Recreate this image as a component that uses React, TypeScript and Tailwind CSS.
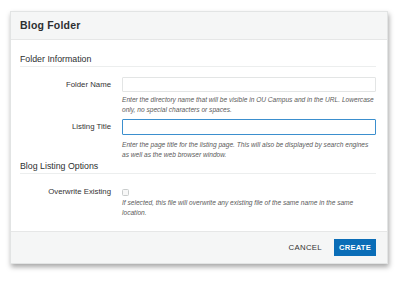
import React from 'react';

const font = { fontFamily: '"Liberation Sans", Arial, sans-serif' };

const Help: React.FC<{ children: React.ReactNode; className?: string }> = ({ children, className }) => (
  <p className={`ml-[102px] text-[6.6px] leading-[9.5px] italic text-[#5a5a5a] ${className ?? ''}`}>{children}</p>
);

export default function App() {
  return (
    <div className="w-[400px] h-[281px] bg-white pt-[11px] pl-[10px]" style={font}>
      <div className="w-[378px] bg-white border border-[#e2e4e4] shadow-[1px_3px_5px_rgba(0,0,0,0.35)] flex flex-col">
        <div className="h-[28px] bg-[#f5f6f6] border-b border-[#e6e7e7] px-[9px] flex items-center">
          <h1 className="text-[10.5px] font-bold text-[#2d2f31] tracking-[0.2px]">Blog Folder</h1>
        </div>

        <div className="pl-[9px] pr-[11px] pt-[14px] pb-[14px]">
          <h2 className="text-[8.8px] leading-[11px] text-[#2d2f31] border-b border-[#eceeee] pb-[1px]">Folder Information</h2>

          <div className="flex items-center mt-[10px]">
            <label className="w-[91px] text-right text-[7.8px] text-[#333]">Folder Name</label>
            <input className="ml-[11px] flex-1 h-[15px] border border-[#e3e5e5] rounded-[1px] bg-white outline-none" />
          </div>
          <Help className="mt-[3px]">
            Enter the directory name that will be visible in OU Campus and in the URL. Lowercase only, no special characters or spaces.
          </Help>

          <div className="flex items-center mt-[5px]">
            <label className="w-[91px] text-right text-[7.8px] text-[#333]">Listing Title</label>
            <input className="ml-[11px] flex-1 h-[16px] border-[1.5px] border-[#3b8fce] rounded-[1px] bg-white outline-none" />
          </div>
          <Help className="mt-[5px]">
            Enter the page title for the listing page. This will also be displayed by search engines as well as the web browser window.
          </Help>

          <h2 className="mt-[2px] text-[8.8px] leading-[11px] text-[#2d2f31] border-b border-[#eceeee] pb-[1px]">Blog Listing Options</h2>

          <div className="flex items-center mt-[12px] h-[12px]">
            <label className="w-[91px] text-right text-[7.8px] text-[#333]">Overwrite Existing</label>
            <span className="ml-[11px] w-[7px] h-[7px] border border-[#c9cccc] rounded-[1.5px] bg-[#f7f7f7]" />
          </div>
          <Help>
            If selected, this file will overwrite any existing file of the same name in the same location.
          </Help>
        </div>

        <div className="h-[32px] bg-[#f5f6f6] border-t border-[#e6e7e7] flex items-center justify-end pr-[11px]">
          <button className="text-[7.8px] text-[#333] tracking-[0.3px] mr-[12px]">CANCEL</button>
          <button className="h-[17px] w-[42px] bg-[#0a6db7] text-white text-[7.6px] font-bold tracking-[0.2px]">CREATE</button>
        </div>
      </div>
    </div>
  );
}
